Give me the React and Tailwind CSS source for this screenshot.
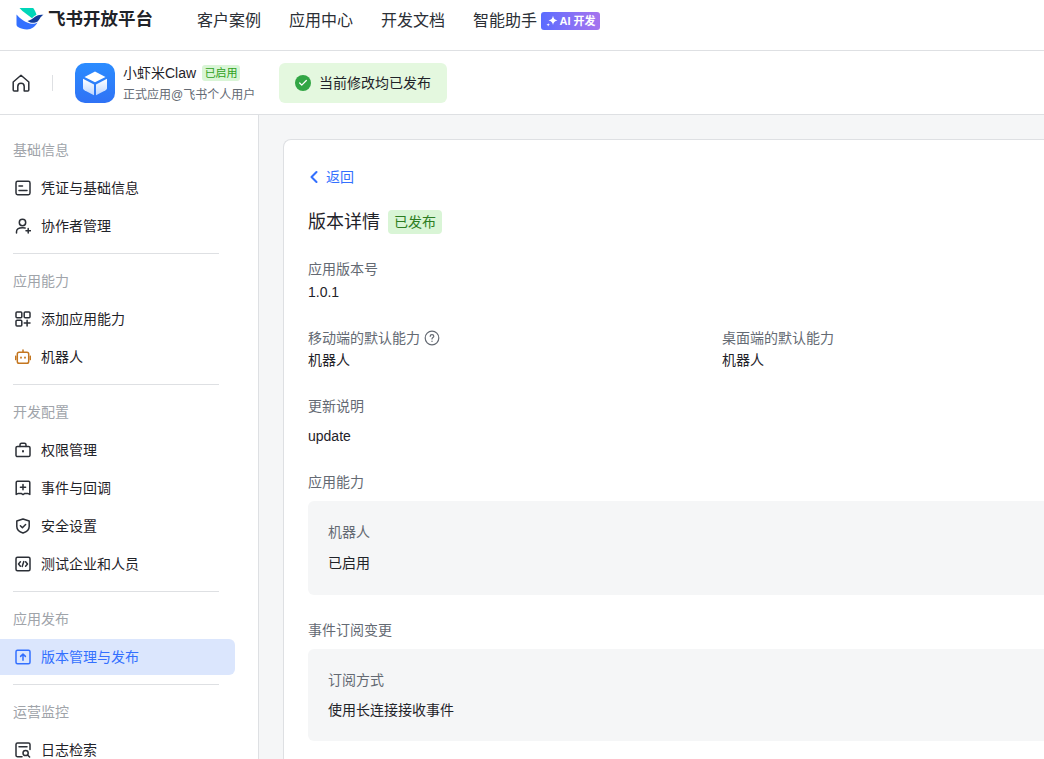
import React from 'react'
import { ChevronLeft, Check } from 'lucide-react'

const stroke = { fill: 'none', stroke: 'currentColor', strokeWidth: 1.5, strokeLinecap: 'round', strokeLinejoin: 'round' }

const Icon = ({ children, className = 'text-[#2b2f36]' }) => (
  <svg viewBox="0 0 16 16" className={`w-4 h-4 shrink-0 ${className}`} {...stroke}>
    {children}
  </svg>
)

const icons = {
  card: <Icon><rect x="1" y="1.3" width="14" height="13.4" rx="1.6" /><path d="M4 6h3.500M4 10.400h8" /></Icon>,
  user: <Icon><circle cx="7.5" cy="4.5" r="3.2" /><path d="M1.500 15v-1.200c0-2.600 2.400-4 6-4 1 0 1.800.1 2.600.3M11 12.700h4.500M13.200 10.500V15" /></Icon>,
  apps: <Icon><rect x="1" y="1" width="5.8" height="5.8" rx="1" /><rect x="9.2" y="1" width="5.8" height="5.8" rx="1" /><rect x="1" y="9.2" width="5.8" height="5.8" rx="1" /><path d="M9.200 12.100H15M12.100 9.200V15" /></Icon>,
  bot: (
    <Icon className="text-[#c4761f]">
      <rect x="2.3" y="3.2" width="11.4" height="11" rx="1.8" />
      <path d="M8 1v2.200M.7 7.200v3.400M15.300 7.200v3.400" />
      <path d="M6 8.400v.4M10 8.400v.4" strokeWidth="1.8" />
    </Icon>
  ),
  lock: <Icon><rect x="1" y="4.4" width="14" height="10.2" rx="1.4" /><path d="M5 4.400V2.800c0-.9.7-1.600 1.600-1.600h2.800c.9 0 1.600.7 1.600 1.600v1.600" /><path d="M8 9v.5" strokeWidth="2" /></Icon>,
  event: <Icon><path d="M1.200 2.400c0-.7.5-1.200 1.200-1.200h11.200c.7 0 1.200.5 1.200 1.200v12l-2.200-1H9.800L8 14.600l-1.800-1.200H3.400l-2.200 1z" /><path d="M5.400 7.200h5.200M8 4.600v5.200" /></Icon>,
  shield: <Icon><path d="M8 1l6.200 2v5.400c0 3.200-2.600 5.400-6.200 6.600-3.600-1.200-6.200-3.400-6.200-6.600V3z" /><path d="M5.400 7.800l2 1.900 3.200-3.200" /></Icon>,
  code: <Icon><rect x="1" y="1.2" width="14" height="13.6" rx="1.5" /><path d="M5.400 5.800L3.500 8l1.900 2.200M10.600 5.800L12.500 8l-1.900 2.200M8.800 5.600L7.200 10.400" /></Icon>,
  publish: <Icon className="text-[#3370ff]"><rect x="1" y="1.2" width="14" height="13.6" rx="1.5" /><path d="M8 11.200V5.200M5.600 7.400L8 5l2.400 2.400" /></Icon>,
  log: <Icon><path d="M7 14.800H2.600c-.9 0-1.600-.7-1.600-1.600V2.600C1 1.700 1.700 1 2.600 1h10.800c.9 0 1.600.7 1.600 1.600v5" /><path d="M4 4.800h8" /><circle cx="10.6" cy="11" r="2.6" /><path d="M12.600 13l2 2" /></Icon>,
}

const groups = [
  { title: '基础信息', items: [['card', '凭证与基础信息'], ['user', '协作者管理']] },
  { title: '应用能力', items: [['apps', '添加应用能力'], ['bot', '机器人']] },
  { title: '开发配置', items: [['lock', '权限管理'], ['event', '事件与回调'], ['shield', '安全设置'], ['code', '测试企业和人员']] },
  { title: '应用发布', items: [['publish', '版本管理与发布', true]] },
  { title: '运营监控', items: [['log', '日志检索']] },
]

const Logo = () => (
  <svg viewBox="0 0 28 22" className="w-7 h-[22px] shrink-0">
    <path d="M3.500 0h13.700c1.300 1.800 2.500 4.200 3.300 6.700-1.800.8-3.200 2-4.500 3.500C12.500 7.500 7 4 3.500 0z" fill="#00d6b9" />
    <path d="M11.500 13c3-.8 5.500-2.500 7.500-4.200 2.400-1.800 5-2.500 8.500-2-1.600.9-2.700 2.200-3.600 3.700-1.300 2.300-2.900 4-5.700 4.300-2.400.2-4.700-.4-6.700-1.800z" fill="#133c9a" />
    <path d="M.5 6.500C3.500 10 8.500 14 14 15.400c2.800.7 5.500.3 7.500-1-2.300 4-5.800 7-10.500 7-3.300 0-6.300-.8-9.400-2.700-.7-.5-1.100-1.200-1.100-2z" fill="#3370ff" />
  </svg>
)

const AppIcon = () => (
  <div className="w-10 h-10 rounded-[10px] bg-gradient-to-b from-[#2b8cff] to-[#2f72f5] flex items-center justify-center">
    <svg viewBox="0 0 26 26" className="w-[26px] h-[26px]">
      <defs>
        <linearGradient id="cubeSide" x1="0" y1="0" x2="0" y2="1">
          <stop offset="0" stopColor="#ffffff" />
          <stop offset="1" stopColor="#bcd6ff" />
        </linearGradient>
      </defs>
      <path d="M13 1.500l10.500 5.400L13 12.300 2.500 6.900z" fill="#ffffff" />
      <path d="M1 8.800l11 5.600v10.800L2.400 20.300C1.500 19.800 1 19 1 18z" fill="url(#cubeSide)" />
      <path d="M25 8.800l-11 5.600v10.800l9.600-4.900c.9-.5 1.400-1.300 1.400-2.300z" fill="url(#cubeSide)" />
    </svg>
  </div>
)

const Label = ({ children }) => <div className="text-sm leading-5 text-[#646a73]">{children}</div>

const Sidebar = () => (
  <aside className="w-[259px] shrink-0 bg-white border-r border-[#dee0e3] pt-[25px]">
    {groups.map((g, i) => (
      <div key={g.title}>
        {i > 0 && <div className="h-px bg-[#dee0e3] ml-[13px] w-[206px] mt-[9px] mb-[17px]" />}
        <div className="pl-[13px] text-sm leading-5 text-[#a0a4aa] mb-[10px]">{g.title}</div>
        {g.items.map(([icon, text, active]) => (
          <div
            key={text}
            className={`h-9 mb-0.5 w-[235px] flex items-center gap-2.5 pl-[15px] rounded-r-md text-sm ${active ? 'bg-[#dbe6fd] text-[#3370ff]' : 'text-[#1f2329]'}`}
          >
            {icons[icon]}
            <span>{text}</span>
          </div>
        ))}
      </div>
    ))}
  </aside>
)

export default function App() {
  return (
    <div
      className="h-screen overflow-hidden flex flex-col bg-[#f5f6f7]"
      style={{ fontFamily: '"Liberation Sans", "Noto Sans CJK SC", sans-serif' }}
    >
      {/* Top nav */}
      <header className="h-[51px] shrink-0 bg-white border-b border-[#dee0e3] flex items-start pl-4 pt-2">
        <div className="flex items-center gap-1 w-[181px] h-[22px]">
          <Logo />
          <span className="text-[17.500px] font-bold text-[#1f2329] whitespace-nowrap">飞书开放平台</span>
        </div>
        <nav className="flex items-center gap-7 h-6 pt-0.5 text-base text-[#2b2f36]">
          <span>客户案例</span>
          <span>应用中心</span>
          <span>开发文档</span>
          <span className="flex items-center gap-1">
            智能助手
            <span className="h-[18px] w-[59px] rounded-[3px] bg-gradient-to-r from-[#5a6cff] to-[#a673ee] text-white text-[11px] font-bold flex items-center justify-center gap-[2px]">
              <svg viewBox="0 0 12 12" className="w-3 h-3" fill="currentColor">
                <path d="M7 .8c.5 2.800 1.700 4.100 4.500 4.700C8.700 6 7.500 7.300 7 10.100 6.500 7.300 5.300 6 2.500 5.500 5.300 4.900 6.500 3.600 7 .8z" />
                <path d="M2.200 8c.2 1.100.7 1.600 1.800 1.800-1.100.2-1.600.7-1.800 1.800C2 10.500 1.500 10 .4 9.800 1.500 9.600 2 9.100 2.200 8z" />
              </svg>
              AI 开发
            </span>
          </span>
        </nav>
      </header>

      {/* App bar */}
      <div className="h-[64px] shrink-0 bg-white border-b border-[#dee0e3] flex items-center">
        <div className="pl-3 pr-[22px] text-[#2b2f36]">
          <svg viewBox="0 0 18 18" className="w-[18px] h-[18px]" {...stroke}>
            <path d="M1.200 8L9 1.300 16.800 8v8a1 1 0 01-1 1h-3.600v-4.500a3.200 3.200 0 00-6.400 0V17H2.200a1 1 0 01-1-1z" />
          </svg>
        </div>
        <div className="h-4 w-px bg-[#dee0e3] mr-[22px]" />
        <AppIcon />
        <div className="ml-2 w-[156px]">
          <div className="flex items-center gap-1.5 h-5">
            <span className="text-sm text-[#1f2329]">小虾米Claw</span>
            <span className="h-4 px-[2.500px] rounded-[3px] bg-[#d9f5d6] text-[#2ea121] text-[11px] leading-4">已启用</span>
          </div>
          <div className="text-xs leading-4 mt-1 text-[#646a73] whitespace-nowrap">正式应用@飞书个人用户</div>
        </div>
        <div className="h-10 w-[168px] rounded-md bg-[#e4f8df] flex items-center pl-4 gap-2 text-sm text-[#1f2329]">
          <span className="w-4 h-4 rounded-full bg-[#32a645] text-white flex items-center justify-center">
            <Check className="w-2.5 h-2.5" strokeWidth={3} />
          </span>
          当前修改均已发布
        </div>
      </div>

      <div className="flex flex-1 min-h-0">
        <Sidebar />
        <main className="flex-1 pl-6 pt-6 min-w-0">
          <div className="bg-white border border-[#dee0e3] border-r-0 rounded-l-lg h-[700px] pl-6 pt-7">
            <div className="flex items-center gap-0.5 -ml-1 text-sm leading-5 text-[#3370ff] h-5 mt-[-1px]">
              <ChevronLeft className="w-5 h-5" strokeWidth={2.5} />
              返回
            </div>
            <div className="flex items-center gap-2 mt-[21px] h-7">
              <h1 className="text-lg text-[#1f2329] font-normal">版本详情</h1>
              <span className="h-6 w-[54px] rounded bg-[#d9f5d6] text-[#2d7d22] text-sm flex items-center justify-center">已发布</span>
            </div>

            <div className="mt-[23px]">
              <Label>应用版本号</Label>
              <div className="text-sm leading-5 mt-[3px] text-[#1f2329]">1.0.1</div>
            </div>

            <div className="grid grid-cols-[414px_1fr] mt-[26px]">
              <div>
                <div className="flex items-center gap-1">
                  <Label>移动端的默认能力</Label>
                  <svg viewBox="0 0 16 16" className="w-4 h-4 text-[#646a73]" {...stroke} strokeWidth="1.2">
                    <circle cx="8" cy="8" r="6.800" />
                    <path d="M6.200 6.300c0-1 .8-1.700 1.800-1.700s1.800.7 1.800 1.600c0 1.300-1.800 1.400-1.800 2.700M8 11.200v.3" />
                  </svg>
                </div>
                <div className="text-sm leading-5 mt-0.5 text-[#1f2329]">机器人</div>
              </div>
              <div>
                <Label>桌面端的默认能力</Label>
                <div className="text-sm leading-5 mt-0.5 text-[#1f2329]">机器人</div>
              </div>
            </div>

            <div className="mt-[26px]">
              <Label>更新说明</Label>
              <div className="text-sm leading-5 mt-[10px] text-[#1f2329]">update</div>
            </div>

            <div className="mt-[26px]">
              <Label>应用能力</Label>
              <div className="mt-[9px] h-[94px] rounded-l-md bg-[#f5f6f7] pl-5 pt-[21px]">
                <Label>机器人</Label>
                <div className="text-sm leading-5 mt-[11px] text-[#1f2329]">已启用</div>
              </div>
            </div>

            <div className="mt-[25px]">
              <Label>事件订阅变更</Label>
              <div className="mt-[9px] h-[92px] rounded-l-md bg-[#f5f6f7] pl-5 pt-[21px]">
                <Label>订阅方式</Label>
                <div className="text-sm leading-5 mt-[10px] text-[#1f2329]">使用长连接接收事件</div>
              </div>
            </div>
          </div>
        </main>
      </div>
    </div>
  )
}
